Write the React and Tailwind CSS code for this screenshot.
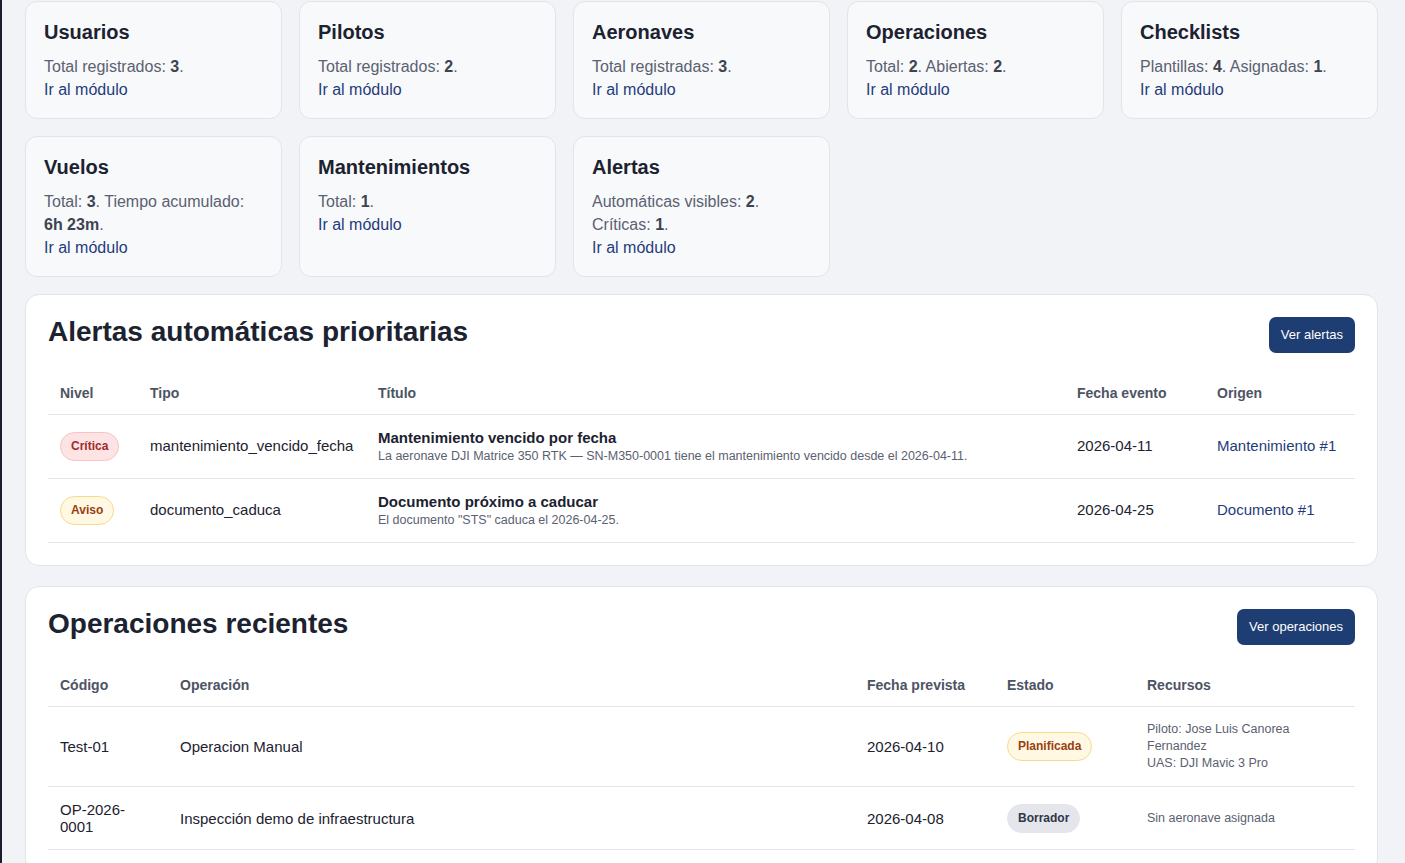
import React from 'react'

const modules = [
  { title: 'Usuarios', body: <>Total registrados: <b>3</b>.</> },
  { title: 'Pilotos', body: <>Total registrados: <b>2</b>.</> },
  { title: 'Aeronaves', body: <>Total registradas: <b>3</b>.</> },
  { title: 'Operaciones', body: <>Total: <b>2</b>. Abiertas: <b>2</b>.</> },
  { title: 'Checklists', body: <>Plantillas: <b>4</b>. Asignadas: <b>1</b>.</> },
  { title: 'Vuelos', body: <>Total: <b>3</b>. Tiempo acumulado: <b>6h 23m</b>.</> },
  { title: 'Mantenimientos', body: <>Total: <b>1</b>.</> },
  { title: 'Alertas', body: <>Automáticas visibles: <b>2</b>. Críticas: <b>1</b>.</> },
]

const alerts = [
  {
    level: 'Crítica',
    tone: 'red',
    type: 'mantenimiento_vencido_fecha',
    title: 'Mantenimiento vencido por fecha',
    desc: 'La aeronave DJI Matrice 350 RTK — SN-M350-0001 tiene el mantenimiento vencido desde el 2026-04-11.',
    date: '2026-04-11',
    origin: 'Mantenimiento #1',
  },
  {
    level: 'Aviso',
    tone: 'yellow',
    type: 'documento_caduca',
    title: 'Documento próximo a caducar',
    desc: 'El documento "STS" caduca el 2026-04-25.',
    date: '2026-04-25',
    origin: 'Documento #1',
  },
]

const operations = [
  {
    code: 'Test-01',
    name: 'Operacion Manual',
    date: '2026-04-10',
    state: 'Planificada',
    tone: 'yellow',
    resources: ['Piloto: Jose Luis Canorea Fernandez', 'UAS: DJI Mavic 3 Pro'],
  },
  {
    code: 'OP-2026-0001',
    name: 'Inspección demo de infraestructura',
    date: '2026-04-08',
    state: 'Borrador',
    tone: 'gray',
    resources: ['Sin aeronave asignada'],
  },
]

const badgeTones = {
  red: 'bg-[#fde3e3] border-[#f6c4c4] text-[#a02a2a]',
  yellow: 'bg-[#fff8e3] border-[#f7da8c] text-[#9a3f12]',
  gray: 'bg-[#e4e6eb] border-[#e4e6eb] text-[#2f3746]',
}

function Badge({ tone, children }) {
  return (
    <span className={`inline-block rounded-full border px-[10px] py-[6px] text-[12px] leading-[15px] font-bold ${badgeTones[tone]}`}>
      {children}
    </span>
  )
}

function ModuleCard({ title, body }) {
  return (
    <div className="rounded-[12px] border border-[#e1e4ea] bg-[#f8f9fb] px-[18px] pt-[16px] pb-[17px]">
      <h3 className="text-[20px] leading-[28px] font-bold text-[#1c2230]">{title}</h3>
      <p className="mt-[9px] text-[16px] leading-[23px] text-[#5a6170] [&_b]:text-[#3d4350]">{body}</p>
      <a className="block text-[16px] leading-[23px] text-[#1f3c7a]">Ir al módulo</a>
    </div>
  )
}

function Section({ title, action, children }) {
  return (
    <section className="rounded-[14px] border border-[#e1e4ea] bg-white px-[22px] pt-[22px] pb-[22px]">
      <div className="flex items-start justify-between">
        <h2 className="text-[28px] leading-[30px] font-bold text-[#1c2230]">{title}</h2>
        <button className="h-[36px] rounded-[7px] bg-[#1e3d72] px-3 text-[13px] text-white">{action}</button>
      </div>
      {children}
    </section>
  )
}

function Th({ children, className = '' }) {
  return (
    <th className={`px-3 pt-[12px] pb-[12px] text-left text-[14px] leading-[18px] font-bold text-[#4d5463] ${className}`}>
      {children}
    </th>
  )
}

export default function App() {
  return (
    <div className="min-h-[863px] border-l-2 border-[#1a1f2e] bg-[#f2f3f7] pl-[23px] pr-[27px] pt-[1px]" style={{ fontFamily: '"Liberation Sans", Arial, sans-serif' }}>
      <div className="grid grid-cols-5 gap-[17px]">
        {modules.map((m) => (
          <ModuleCard key={m.title} {...m} />
        ))}
      </div>

      {/* Alertas automáticas */}
      <div className="mt-[17px]">
        <Section title="Alertas automáticas prioritarias" action="Ver alertas">
          <table className="mt-[19px] w-full table-fixed border-collapse">
            <thead>
              <tr className="border-b border-[#e2e4e9]">
                <Th className="w-[90px]">Nivel</Th>
                <Th className="w-[228px]">Tipo</Th>
                <Th>Título</Th>
                <Th className="w-[140px]">Fecha evento</Th>
                <Th className="w-[150px]">Origen</Th>
              </tr>
            </thead>
            <tbody>
              {alerts.map((a) => (
                <tr key={a.type} className="border-b border-[#e2e4e9] text-[15px] text-[#1c2230]">
                  <td className="px-3 py-[13px] align-middle"><Badge tone={a.tone}>{a.level}</Badge></td>
                  <td className="px-3 py-[13px]">{a.type}</td>
                  <td className="px-3 py-[13px]">
                    <div className="text-[15px] leading-[19px] font-bold">{a.title}</div>
                    <div className="text-[12.5px] leading-[18px] text-[#5a6170]">{a.desc}</div>
                  </td>
                  <td className="px-3 py-[13px]">{a.date}</td>
                  <td className="px-3 py-[13px] text-[#1f3c7a]">{a.origin}</td>
                </tr>
              ))}
            </tbody>
          </table>
        </Section>
      </div>

      {/* Operaciones recientes */}
      <div className="mt-[20px]">
        <Section title="Operaciones recientes" action="Ver operaciones">
          <table className="mt-[19px] w-full table-fixed border-collapse">
            <thead>
              <tr className="border-b border-[#e2e4e9]">
                <Th className="w-[120px]">Código</Th>
                <Th>Operación</Th>
                <Th className="w-[140px]">Fecha prevista</Th>
                <Th className="w-[140px]">Estado</Th>
                <Th className="w-[220px]">Recursos</Th>
              </tr>
            </thead>
            <tbody>
              {operations.map((o) => (
                <tr key={o.code} className="border-b border-[#e2e4e9] text-[15px] leading-[17px] text-[#1c2230]">
                  <td className="px-3 py-[14px]">{o.code}</td>
                  <td className="px-3 py-[14px]">{o.name}</td>
                  <td className="px-3 py-[14px]">{o.date}</td>
                  <td className="px-3 py-[14px]"><Badge tone={o.tone}>{o.state}</Badge></td>
                  <td className="px-3 py-[14px] text-[12.5px] leading-[17px] text-[#5a6170]">
                    {o.resources.map((r) => (
                      <div key={r}>{r}</div>
                    ))}
                  </td>
                </tr>
              ))}
            </tbody>
          </table>
        </Section>
      </div>
    </div>
  )
}
